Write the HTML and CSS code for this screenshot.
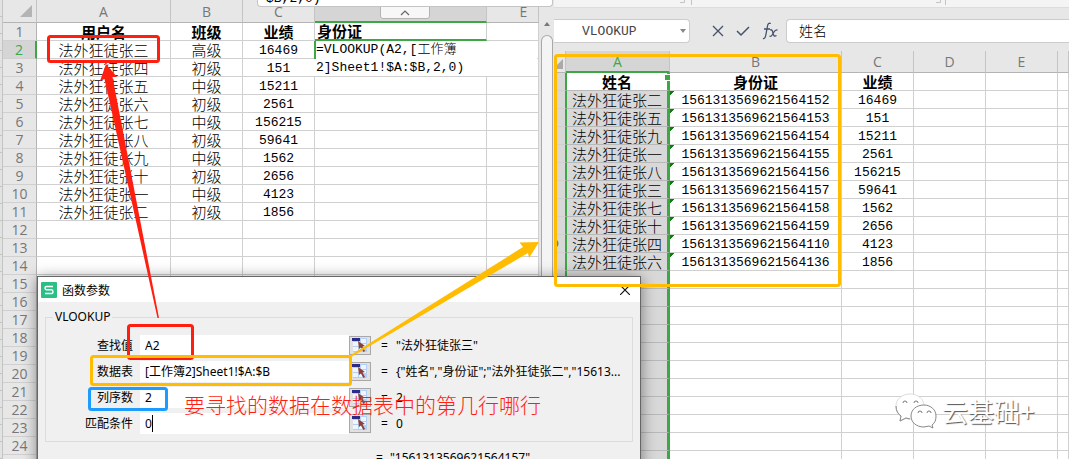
FILE: index.html
```html
<!DOCTYPE html>
<html lang="zh-CN">
<head>
<meta charset="utf-8">
<title>VLOOKUP</title>
<link rel="stylesheet" href="styles.css">
</head>
<body>
<main class="desktop">
  <section class="window window-left">
    <div class="edge"></div>
    <table class="sheet sheet-left">
      <colgroup><col class="w-num"><col class="w-name"><col class="w-small"><col class="w-small"><col class="w-wide"><col></colgroup>
      <thead><tr><th class="corner"><svg width="12" height="12" viewBox="0 0 12 12"><path d="M12 0V12H0Z" fill="#b4b4b4"/></svg></th><th>A</th><th>B</th><th>C</th><th class="picked"></th><th class="last">E</th></tr></thead>
      <tbody>
        <tr class="titles"><th>1</th><td>用户名</td><td>班级</td><td>业绩</td><td class="active-title">身份证</td><td></td></tr>
        <tr><th class="current">2</th><td>法外狂徒张三</td><td>高级</td><td class="n">16469</td><td class="editing"><textarea class="formula" aria-label="公式" spellcheck="false">=VLOOKUP(A2,[工作簿
2]Sheet1!$A:$B,2,0)</textarea></td><td></td></tr>
        <tr><th>3</th><td>法外狂徒张四</td><td>初级</td><td class="n">151</td><td></td><td></td></tr>
        <tr><th>4</th><td>法外狂徒张五</td><td>中级</td><td class="n">15211</td><td></td><td></td></tr>
        <tr><th>5</th><td>法外狂徒张六</td><td>初级</td><td class="n">2561</td><td></td><td></td></tr>
        <tr><th>6</th><td>法外狂徒张七</td><td>中级</td><td class="n">156215</td><td></td><td></td></tr>
        <tr><th>7</th><td>法外狂徒张八</td><td>初级</td><td class="n">59641</td><td></td><td></td></tr>
        <tr><th>8</th><td>法外狂徒张九</td><td>中级</td><td class="n">1562</td><td></td><td></td></tr>
        <tr><th>9</th><td>法外狂徒张十</td><td>初级</td><td class="n">2656</td><td></td><td></td></tr>
        <tr><th>10</th><td>法外狂徒张一</td><td>中级</td><td class="n">4123</td><td></td><td></td></tr>
        <tr><th>11</th><td>法外狂徒张二</td><td>初级</td><td class="n">1856</td><td></td><td></td></tr>
        <tr><th>12</th><td></td><td></td><td></td><td></td><td></td></tr>
        <tr><th>13</th><td></td><td></td><td></td><td></td><td></td></tr>
        <tr><th>14</th><td></td><td></td><td></td><td></td><td></td></tr>
        <tr><th>15</th><td></td><td></td><td></td><td></td><td></td></tr>
        <tr><th>16</th><td></td><td></td><td></td><td></td><td></td></tr>
        <tr><th>17</th><td></td><td></td><td></td><td></td><td></td></tr>
        <tr><th>18</th><td></td><td></td><td></td><td></td><td></td></tr>
        <tr><th>19</th><td></td><td></td><td></td><td></td><td></td></tr>
        <tr><th>20</th><td></td><td></td><td></td><td></td><td></td></tr>
        <tr><th>21</th><td></td><td></td><td></td><td></td><td></td></tr>
        <tr><th>22</th><td></td><td></td><td></td><td></td><td></td></tr>
        <tr><th>23</th><td></td><td></td><td></td><td></td><td></td></tr>
        <tr><th>24</th><td></td><td></td><td></td><td></td><td></td></tr>
        <tr><th>25</th><td></td><td></td><td></td><td></td><td></td></tr>
      </tbody>
    </table>
    <div class="scrollbar"><svg class="up" width="6" height="4" viewBox="0 0 6 4"><path d="M3 0L6 4H0Z" fill="#777"/></svg><div class="thumb"></div></div>
    <button class="collapse" aria-label="收起"><svg width="10" height="6" viewBox="0 0 10 6"><path d="M1 5L5 1L9 5" fill="none" stroke="#666" stroke-width="1.2"/></svg></button>
    <div class="bar-tail"><span>$B,2,0)</span></div>
  </section>

  <section class="window window-right">
    <div class="ribbon"><svg width="400" height="8" viewBox="0 0 400 8"><path d="M126 2.500H130.500V0M137.500 0V5M382 2.500H386.500V0M391.500 0V5" fill="none" stroke="#c4c4c4"/></svg></div>
    <div class="fx-bar">
      <div class="name-box"><input class="name" value="VLOOKUP" aria-label="名称框"><svg width="6" height="4" viewBox="0 0 6 4"><path d="M0 0H6L3 4Z" fill="#888"/></svg></div>
      <div class="fx-tools">
        <button aria-label="取消"><svg width="12" height="12" viewBox="0 0 12 12"><path d="M1 1L11 11M11 1L1 11" fill="none" stroke="#45516b" stroke-width="1.300"/></svg></button>
        <button aria-label="确认"><svg width="14" height="12" viewBox="0 0 14 12"><path d="M1 6L5 10L13 2" fill="none" stroke="#45516b" stroke-width="1.500"/></svg></button>
        <button aria-label="插入函数"><svg width="17" height="18" viewBox="0 0 17 18"><path d="M1 16.500C3 17 3.500 15 4 12L5.500 4C6 1.500 7 .8 8.800 1.500M2 7H8M8 8C10 7 10.500 9 11 11C11.500 14 12.500 14.800 14.500 13.500M15.500 8C13 7.500 12 10 11 11.500C10 13.500 9 15 7.500 14" fill="none" stroke="#45516b" stroke-width="1.300"/></svg></button>
      </div>
      <input class="content" value="姓名" aria-label="编辑栏">
    </div>
    <table class="sheet sheet-right">
      <colgroup><col class="w-tiny"><col class="w-key"><col class="w-wide"><col class="w-small"><col class="w-small"><col class="w-small"><col></colgroup>
      <thead><tr><th class="corner"><svg width="7" height="10" viewBox="0 0 7 10"><path d="M7 0V10H0V7Z" fill="#aaa"/></svg></th><th class="picked">A</th><th>B</th><th>C</th><th>D</th><th>E</th><th></th></tr></thead>
      <tbody>
        <tr class="titles"><th></th><td class="key first">姓名<i class="handle"></i></td><td>身份证</td><td>业绩</td><td></td><td></td><td></td></tr>
        <tr><th></th><td class="key">法外狂徒张二</td><td class="n t">1561313569621564152</td><td class="n">16469</td><td></td><td></td><td></td></tr>
        <tr><th></th><td class="key">法外狂徒张五</td><td class="n t">1561313569621564153</td><td class="n">151</td><td></td><td></td><td></td></tr>
        <tr><th></th><td class="key">法外狂徒张九</td><td class="n t">1561313569621564154</td><td class="n">15211</td><td></td><td></td><td></td></tr>
        <tr><th></th><td class="key">法外狂徒张一</td><td class="n t">1561313569621564155</td><td class="n">2561</td><td></td><td></td><td></td></tr>
        <tr><th></th><td class="key">法外狂徒张八</td><td class="n t">1561313569621564156</td><td class="n">156215</td><td></td><td></td><td></td></tr>
        <tr><th></th><td class="key">法外狂徒张三</td><td class="n t">1561313569621564157</td><td class="n">59641</td><td></td><td></td><td></td></tr>
        <tr><th></th><td class="key">法外狂徒张七</td><td class="n t">1561313569621564158</td><td class="n">1562</td><td></td><td></td><td></td></tr>
        <tr><th></th><td class="key">法外狂徒张十</td><td class="n t">1561313569621564159</td><td class="n">2656</td><td></td><td></td><td></td></tr>
        <tr><th class="mark"></th><td class="key">法外狂徒张四</td><td class="n t">1561313569621564110</td><td class="n">4123</td><td></td><td></td><td></td></tr>
        <tr><th></th><td class="key">法外狂徒张六</td><td class="n t">1561313569621564136</td><td class="n">1856</td><td></td><td></td><td></td></tr>
        <tr><th></th><td class="key"></td><td></td><td></td><td></td><td></td><td></td></tr>
        <tr><th></th><td class="key"></td><td></td><td></td><td></td><td></td><td></td></tr>
        <tr><th></th><td class="key"></td><td></td><td></td><td></td><td></td><td></td></tr>
        <tr><th></th><td class="key"></td><td></td><td></td><td></td><td></td><td></td></tr>
        <tr><th></th><td class="key"></td><td></td><td></td><td></td><td></td><td></td></tr>
        <tr><th></th><td class="key"></td><td></td><td></td><td></td><td></td><td></td></tr>
        <tr><th></th><td class="key"></td><td></td><td></td><td></td><td></td><td></td></tr>
        <tr><th></th><td class="key"></td><td></td><td></td><td></td><td></td><td></td></tr>
        <tr><th></th><td class="key"></td><td></td><td></td><td></td><td></td><td></td></tr>
        <tr><th></th><td class="key"></td><td></td><td></td><td></td><td></td><td></td></tr>
        <tr><th></th><td class="key"></td><td></td><td></td><td></td><td></td><td></td></tr>
      </tbody>
    </table>
    <div class="watermark">
      <svg width="42" height="36" viewBox="0 0 42 36">
        <g fill="#fff" stroke-width="1">
          <path d="M15 1C7 1 1 6 1 13C1 18 3 21 6 23L5 28L11 25C13 26 15 26 17 26C24 26 29 20 29 13C29 6 23 1 15 1Z" stroke="#ddd"/>
          <path d="M1 13C1 18 3 21 6 23L5 28L11 25L15 26" fill="none" stroke="#888"/>
          <path d="M29 12C21 12 16 17 16 23C16 29 21 34 29 34L34 33L38 35L37 32C40 30 41 27 41 23C41 17 36 12 29 12Z" stroke="#888"/>
          <path d="M8 10A2 2 0 0 1 12 10M19 10A2 2 0 0 1 23 10M23 20A2 2 0 0 1 27 20M32 20A2 2 0 0 1 36 20" fill="none" stroke="#777"/>
        </g>
      </svg>
      <span>云基础+</span>
    </div>
  </section>

  <section class="dialog" role="dialog" aria-label="函数参数">
    <header class="dialog-title">
      <svg width="16" height="16" viewBox="0 0 16 16"><rect width="16" height="16" rx="1" fill="#2bbf86"/><path d="M12 4.500H5.500Q4 4.500 4 6T5.500 7.800H10.500Q12 7.800 12 9.700T10.500 11.500H4" fill="none" stroke="#fff" stroke-width="1.400"/></svg>
      <span>函数参数</span>
      <button class="close" aria-label="关闭"><svg width="10" height="10" viewBox="0 0 10 10"><path d="M0 0L10 10M10 0L0 10" stroke="#111" stroke-width="1.200"/></svg></button>
    </header>
    <div class="dialog-body">
      <fieldset>
        <legend>VLOOKUP</legend>
        <div class="arg"><label for="a1">查找值</label><input id="a1" value="A2"><button aria-label="选择区域"><svg width="16" height="14" viewBox="0 0 16 14"><use href="#pick"/></svg></button><span>=</span><output>"法外狂徒张三"</output></div>
        <div class="arg"><label for="a2">数据表</label><input id="a2" value="[工作簿2]Sheet1!$A:$B"><button aria-label="选择区域"><svg width="16" height="14" viewBox="0 0 16 14"><use href="#pick"/></svg></button><span>=</span><output>{"姓名","身份证";"法外狂徒张二","15613...</output></div>
        <div class="arg"><label for="a3">列序数</label><input id="a3" value="2"><button aria-label="选择区域"><svg width="16" height="14" viewBox="0 0 16 14"><use href="#pick"/></svg></button><span>=</span><output>2</output></div>
        <div class="arg"><label for="a4">匹配条件</label><input id="a4" value="0"><button aria-label="选择区域"><svg width="16" height="14" viewBox="0 0 16 14"><use href="#pick"/></svg></button><span>=</span><output>0</output><i class="caret"></i></div>
      </fieldset>
      <p class="result"><span>=</span><output>"1561313569621564157"</output></p>
    </div>
  </section>

  <svg class="marks" width="1069" height="459" viewBox="0 0 1069 459">
    <defs>
      <g id="pick">
        <rect x="1" y="0" width="14" height="14" fill="#b4cff5"/>
        <path d="M1 4H8V8H1ZM1 9H6V13H1ZM9 1H14V5H9ZM11 6H14V9H11ZM7 9H10V13H7Z" fill="#eef5ff"/>
        <rect x="0" y="0" width="8" height="3" fill="#2b2b86"/>
        <path d="M6 3L13 8L10.500 8.500L13 13L11.500 14L9 9.500L7 11Z" fill="#8b4038"/>
      </g>
    </defs>
    <g fill="none" stroke-width="3">
      <rect x="48.500" y="36.500" width="110" height="25" rx="2" stroke="#ff1f10"/>
      <rect x="128.500" y="325.500" width="64" height="33" rx="2" stroke="#ff1f10"/>
      <rect x="555.500" y="55.500" width="284" height="230" rx="2" stroke="#ffbc00"/>
      <rect x="91.500" y="356.500" width="259" height="28" rx="2" stroke="#ffbc00"/>
      <rect x="89.500" y="388.500" width="77" height="21" rx="2" stroke="#1e9bff"/>
    </g>
    <path d="M106 64L117 77L112.500 77L159 318L157.500 318L104.500 79L100 81Z" fill="#ff1f10"/>
    <path d="M539 242L529 258L528 253L351 357L350 355.500L523 247L519.500 242.500Z" fill="#ffbc00"/>
  </svg>
  <p class="note">要寻找的数据在数据表中的第几行哪行</p>
</main>
</body>
</html>
```
FILE: styles.css
```css
* { box-sizing: border-box; }
body { margin: 0; overflow: hidden; font: 12px "Noto Sans", "Noto Sans CJK SC", sans-serif; color: #000; }
button, input, textarea { font: inherit; color: inherit; margin: 0; padding: 0; border: 0; border-radius: 0; background: none; outline: 0; }
button { display: flex; align-items: center; justify-content: center; }
svg { display: block; }
p { margin: 0; }

.desktop { position: relative; display: flex; height: 100vh; overflow: hidden; background: #e7e7e7; }
.window { position: relative; overflow: hidden; background: #e7e7e7; }
.window-left { display: flex; align-items: stretch; flex: 0 0 554px; }
.window-right { flex: 1; min-width: 0; }
.edge { flex: 0 0 3px; background: repeating-linear-gradient(#e2e2e2 0 16px, #c4c4c4 16px 17px); border-right: 1px solid #c4c4c4; }

/* Grid sheets */
.sheet { table-layout: fixed; border-collapse: separate; border-spacing: 0; align-self: flex-start; }
.sheet-left { width: 536px; }
.sheet-right { width: 100%; }
.w-num { width: 34px; }
.w-name { width: 134px; }
.w-small { width: 72px; }
.w-wide { width: 172px; }
.w-tiny { width: 12px; }
.w-key { width: 104px; }
.sheet td, .sheet th { height: 18px; padding: 0; line-height: 17px; white-space: nowrap; border-right: 1px solid #d0d0d0; border-bottom: 1px solid #d0d0d0; }
.sheet td { position: relative; background: #fff; text-align: center; font-family: "Noto Sans CJK SC", sans-serif; font-size: 15px; font-weight: 300; }
.sheet th { color: #777; font-family: "Open Sans", sans-serif; font-size: 14px; font-weight: 400; text-align: center; background: #e7e7e7; }
.sheet tbody th { border-right-color: #b4b4b4; }
.sheet thead th { height: 22px; border-right-color: #c4c4c4; border-bottom-color: #b4b4b4; }
.sheet-left thead th { height: 23px; }
.sheet .titles td { font-weight: 700; }
.sheet td.n { padding-top: 2px; line-height: 15px; font-family: "Liberation Mono", monospace; font-size: 13px; }
.sheet .corner svg { margin: 0 4px 0 auto; }
.sheet-left .last { padding-left: 22px; }
.sheet thead .picked { background: #d5d5d5; color: #3ea745; border-bottom: 2px solid #3ea745; }
.sheet .current { background: #d5d5d5; color: #3ea745; border-right: 2px solid #3ea745; }
.sheet .active-title { text-align: left; padding-left: 2px; line-height: 16px; border-bottom: 2px solid #3ea745; }
.formula { position: absolute; z-index: 1; top: 0; left: -1px; width: 223px; height: 35px; padding-left: 2px; resize: none; overflow: hidden; background: linear-gradient(#3ea745, #3ea745) 0 0 / 2px 18px no-repeat #fff; font: 300 13px/18px "Liberation Mono", "Noto Sans CJK SC", monospace; white-space: pre; }

.scrollbar { flex: 1; display: flex; flex-direction: column; padding: 15px 1px 0 2px; background: #e7e7e7; }
.up { margin: 7px auto 9px; }
.thumb { flex: 1; border: 1px solid #a8a8a8; border-bottom: 0; border-radius: 6px 6px 0 0; background: #f4f4f4; }
.bar-tail { position: absolute; top: 0; left: 257px; right: 1px; height: 7px; overflow: hidden; display: flex; align-items: flex-end; padding-left: 8px; background: #fff; border: 1px solid #c4c4c4; border-top: 0; border-radius: 0 0 4px 4px; font: 13px/14px "Liberation Mono", monospace; }
.collapse { position: absolute; top: 0; left: 380px; width: 50px; height: 19px; padding-top: 6px; background: #f7f7f7; border: 1px solid #b4b4b4; border-radius: 0 0 3px 3px; }

/* Right window */
.ribbon { height: 8px; background: #f4f4f4; border-bottom: 1px solid #dcdcdc; }
.fx-bar { display: flex; height: 43px; padding: 11px 0 8px; }
.name-box { display: flex; align-items: center; width: 136px; padding-right: 3px; background: #fff; border: 1px solid #ccc; border-left: 0; border-radius: 0 4px 4px 0; }
.name { flex: 1; min-width: 0; padding-left: 28px; color: #444; font: 13px "Liberation Mono", monospace; }
.fx-tools { display: flex; align-items: center; gap: 12px; padding: 0 10px 0 22px; width: 96px; }
.content { flex: 1; min-width: 0; padding: 0 0 2px 12px; background: #fff; border: 1px solid #ccc; border-right: 0; border-radius: 4px 0 0 4px; font: 300 14px "Noto Sans CJK SC", sans-serif; }
.sheet-right tbody th { background: #d8d8d8; border-right: 1px solid #3ea745; }
.sheet-right .corner svg { margin: 5px auto 0 2px; }
.sheet td.key { background: #d8d8d8; border-left: 1px solid #3ea745; border-right: 3px solid #3ea745; border-bottom-color: #b8b8b8; }
.sheet td.first { background: #fff; }
.handle { position: absolute; z-index: 1; top: 1px; right: -4px; width: 7px; height: 7px; background: #3ea745; border: 1px solid #fff; }
.sheet td.t { background: linear-gradient(135deg, #107c10 3px, transparent 3px) #fff; }
.sheet-right th.mark { background: radial-gradient(circle at 0 50%, #3e9f70 4px, #d8d8d8 5px); }

.watermark { position: absolute; left: 341px; top: 393px; display: flex; align-items: flex-start; gap: 5px; color: #fff; font: 26px/36px "Noto Sans CJK SC", sans-serif; text-shadow: 1px 1px 1px #555; }

/* Dialog */
.dialog { position: absolute; left: 37px; top: 276px; width: 604px; height: 220px; background: #f0f0f0; border: 1px solid #666; box-shadow: 0 2px 14px rgba(0, 0, 0, .45); }
.dialog-title { display: flex; align-items: center; gap: 5px; height: 25px; padding: 0 10px 0 3px; background: #fff; }
.close { margin-left: auto; }
.dialog-body { padding: 7px; }
fieldset { margin: 0; padding: 7px 0 5px; border: 1px solid #dcdcdc; min-width: 0; }
legend { margin-left: 7px; padding: 0 2px; line-height: 16px; }
.arg { position: relative; display: grid; grid-template-columns: 87px 7px 209px 22px 10px 15px 1fr; align-items: center; height: 26px; }
.arg label { grid-column: 1; text-align: right; }
.arg input { grid-column: 3; height: 21px; padding-left: 5px; background: #fff; }
.arg button { grid-column: 4; height: 19px; background: #e1e1e1; border: 1px solid #a8a8a8; }
.arg span { grid-column: 6; }
.arg output { grid-column: 7; white-space: nowrap; }
.caret { position: absolute; left: 106px; top: 5px; width: 1px; height: 17px; background: #000; }
.result { display: flex; gap: 7px; padding: 7px 0 0 331px; line-height: 18px; }

.marks { position: absolute; left: 0; top: 0; pointer-events: none; }
.note { position: absolute; left: 184px; top: 389px; color: #ff1f10; font: 300 21px/30px "Noto Sans CJK SC", sans-serif; white-space: nowrap; }
```
